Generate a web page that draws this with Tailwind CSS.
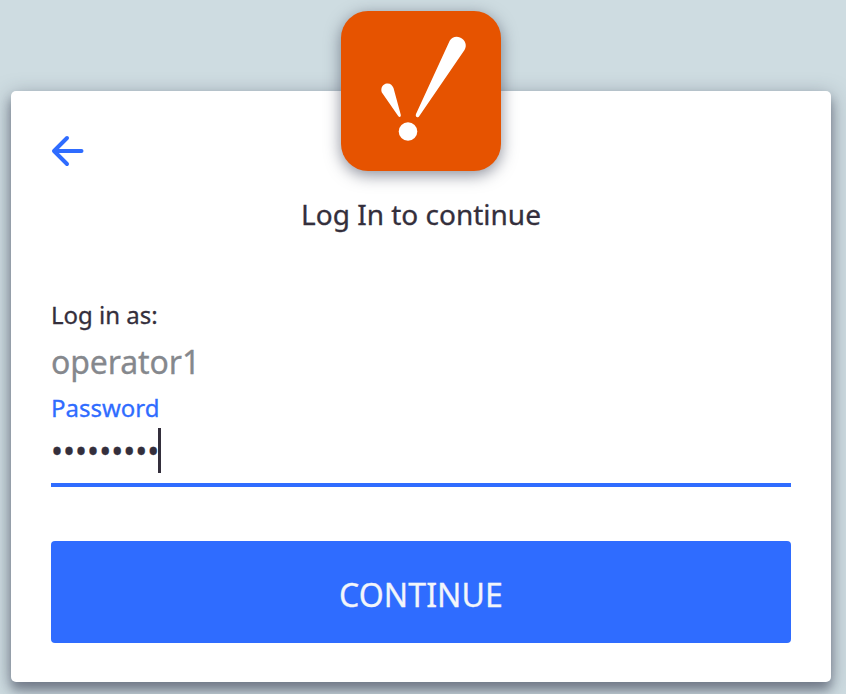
<!DOCTYPE html>
<html lang="en">
<head>
<meta charset="utf-8">
<title>Log In</title>
<script src="https://cdn.jsdelivr.net/npm/@tailwindcss/browser@4"></script>
</head>
<body class="h-[694px] overflow-hidden bg-[#cedce1] px-[11px] pt-[91px] font-['Noto_Sans',sans-serif] text-[#342f3c] [-webkit-text-stroke-width:0.3px]">
<main class="relative flex h-[591px] w-[820px] flex-col rounded-[5px] bg-white px-10 shadow-[0_8px_10px_rgba(60,65,85,0.4),0_5px_20px_rgba(60,65,85,0.5)]">
  <div class="absolute -top-20 left-[330px] size-40 rounded-[27px] bg-[#e65300] shadow-[0_4px_16px_rgba(60,65,85,0.6)]">
    <svg class="size-40" viewBox="0 0 160 160" fill="#fff" aria-hidden="true">
      <path d="M108.7 29.8C111 26 115 24.9 119 26.4C124.5 28.7 126.3 34.5 123.5 39L78.5 104.7C77 107.5 73.8 106.2 75 103Z"/>
      <path d="M40.7 81.3C39.4 76.5 42 73 45.8 72.5C49.5 72.2 51.2 74 52.5 77L59.7 103.5C60.3 106 58.5 107 57 104.7Z"/>
      <circle cx="67" cy="120.5" r="9.3"/>
    </svg>
  </div>
  <button class="mt-[42px] h-9 w-9" aria-label="Back">
    <svg class="size-9" viewBox="0 0 36 36" fill="none" stroke="#2f6cff" stroke-width="4" stroke-linecap="round" stroke-linejoin="round" aria-hidden="true">
      <path d="M30.5 18H4M16 5L3 18L16 31"/>
    </svg>
  </button>
  <h1 class="mt-[25px] h-10 text-center text-[28px] leading-10">Log In to continue</h1>
  <div class="mt-[65px] h-8 text-[24px] leading-8">Log in as:</div>
  <div class="mt-[11px] h-10 text-[32px] leading-10 tracking-[-0.1px] text-[#85888d]">operator1</div>
  <div class="mt-[10px] h-8 text-[24px] leading-8 text-[#2f6cff]">Password</div>
  <div class="mt-[4px] flex h-[59px] items-start border-b-4 border-[#2f6cff]">
    <div class="flex h-[45px] w-[107px] items-center text-[32px] leading-none">•••••••••</div>
    <div class="h-[45px] w-[3px] bg-[#342f3c]"></div>
  </div>
  <button class="mt-[54px] h-[102px] w-full rounded-[4px] bg-[#2f6cff] pt-1.5 text-[32px] tracking-[0.1px] text-[#f2f5fa]">CONTINUE</button>
</main>
</body>
</html>
